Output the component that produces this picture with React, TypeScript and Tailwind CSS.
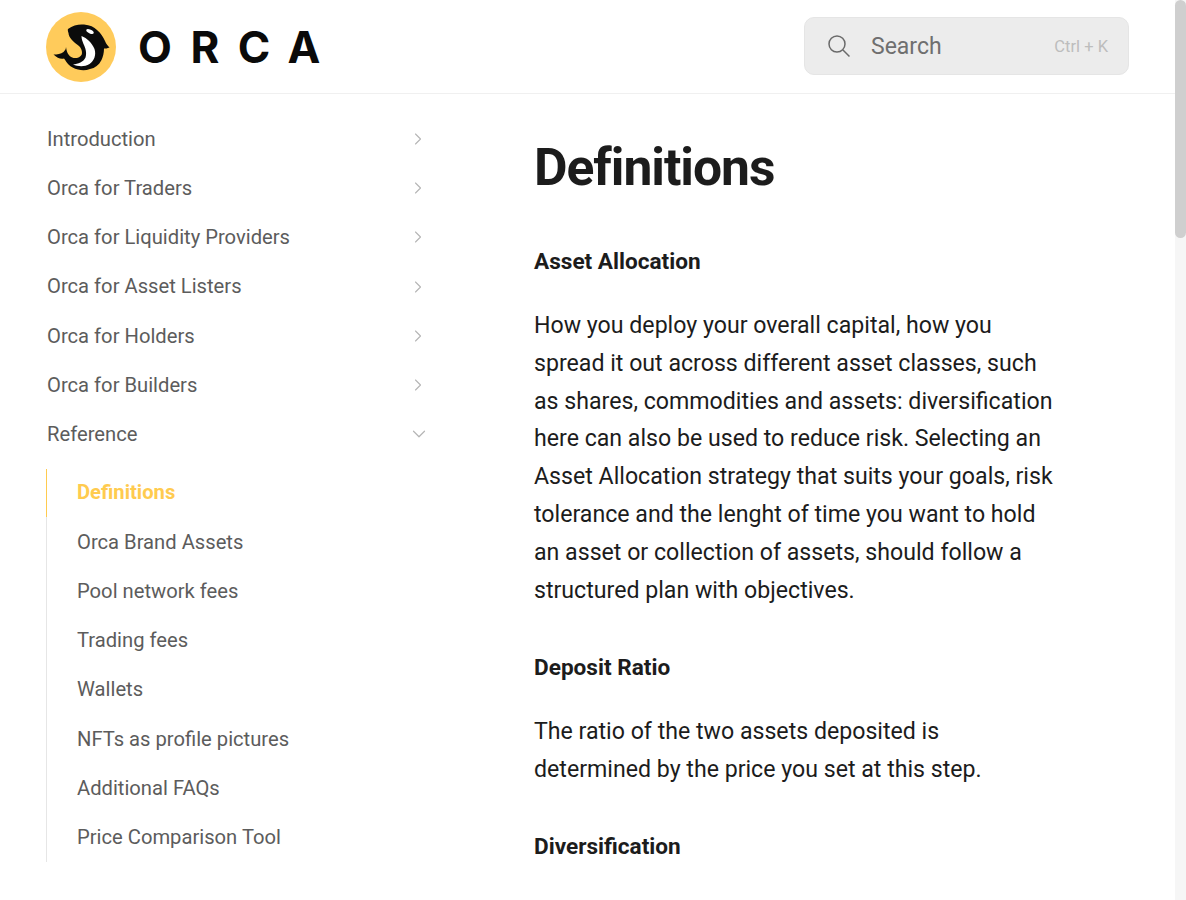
import { ChevronDown, ChevronRight } from "lucide-react";

const topItems = [
  "Introduction",
  "Orca for Traders",
  "Orca for Liquidity Providers",
  "Orca for Asset Listers",
  "Orca for Holders",
  "Orca for Builders",
];

const subItems = [
  "Orca Brand Assets",
  "Pool network fees",
  "Trading fees",
  "Wallets",
  "NFTs as profile pictures",
  "Additional FAQs",
  "Price Comparison Tool",
];

const OrcaMark = () => (
  <svg viewBox="0 0 70 70" className="h-[70px] w-[70px] shrink-0">
    <circle cx="35" cy="35" r="35" fill="#ffcb5b" />
    <path
      d="M22 17C27 13 33 12 38 12.5C44 13 48 15 51 18C55 21 57 25 59 29C60 32 62 34 63.5 35.5C61 36.5 60 36.5 58 36.5C58 41 57 45 55.5 48C53 53 49 56 44 57C40 58.500 36 58.500 32 57.500C28 56.500 25 55 22.500 52.500C21 51 19.500 48.500 18 46.500C15 47.500 11 46 7.500 42.500C11 42.500 15 42 17.500 40C19 38.500 20 37 20 35C20.500 38 21 41 22.500 42.500C24.500 45.500 28 46.500 31 46C34 45 36 43.500 36 41C36 38 35 36 33 34C30.500 32 27.500 30 25.500 27.500C24 25.500 22.500 23.500 22.500 21C22 19.500 21.500 18 22 17Z"
      fill="#0b0b0b"
    />
    <path
      d="M35.500 24C41 26 46 31 48.500 37C50.500 43 48 49 43.500 52C38.500 55 32 54.500 27 52.500C32 52 37.500 50 39.500 45.500C41 41 39.500 36 37.500 32C36.500 29.500 35.500 27 35.500 24Z"
      fill="#ffffff"
    />
    <ellipse cx="44" cy="19.500" rx="4" ry="1.800" fill="#ffffff" transform="rotate(25 44 19.500)" />
  </svg>
);

const NavRow = ({ label, open }: { label: string; open?: boolean }) => (
  <div className="flex h-[49.2px] items-center justify-between text-[20.2px] text-[#5c5c5c]">
    <span>{label}</span>
    {open ? (
      <ChevronDown className="-mr-[1px] h-[22px] w-[22px] text-[#b5b5b5]" strokeWidth={1.3} />
    ) : (
      <ChevronRight className="mr-[1px] h-[20px] w-[20px] text-[#b5b5b5]" strokeWidth={1.3} />
    )}
  </div>
);

const App = () => {
  return (
    <div className="flex h-[900px] overflow-hidden bg-white font-['Roboto',sans-serif]">
      <div className="min-w-0 flex-1">
        <header className="flex h-[94px] items-center justify-between border-b border-[#f0f0f0] pl-[46px] pr-[46px]">
          <div className="flex items-center">
            <OrcaMark />
            <span className="ml-[22px] mt-[1px] font-['Inter',sans-serif] text-[44px] leading-none font-bold tracking-[0.42em] text-[#0a0a0a]">
              ORCA
            </span>
          </div>
          <div className="mb-[1px] flex h-[58px] w-[325px] items-center rounded-[10px] border border-[#e5e5e5] bg-[#ececec] pl-[22px] pr-[20px]">
            <svg viewBox="0 0 24 24" className="-mt-[1px] h-[24px] w-[24px] text-[#6a6a6a]" fill="none" stroke="currentColor" strokeWidth="1.5">
              <circle cx="10" cy="10" r="8" />
              <path d="M16 16l6.500 6.500" />
            </svg>
            <span className="ml-[20px] flex-1 pt-[3px] text-[23px] text-[#6f6f6f]">Search</span>
            <span className="pt-[3px] text-[16.5px] text-[#bdbdbd]">Ctrl + K</span>
          </div>
        </header>

        <div className="flex">
          <nav className="w-[534px] shrink-0 pl-[47px] pr-[105px] pt-[20.400px]">
            {topItems.map((item) => (
              <NavRow key={item} label={item} />
            ))}
            <NavRow label="Reference" open />
            <div className="mt-[10.700px] -ml-px border-l border-[#e6e6e6]">
              <div className="-ml-px flex h-[48px] items-center border-l border-[#ffcb4f] pb-[2px] pl-[30px] text-[20.2px] font-bold text-[#ffcb4f]">
                Definitions
              </div>
              {subItems.map((item) => (
                <div key={item} className="flex h-[49.2px] items-center pl-[30px] text-[20.2px] text-[#5c5c5c]">
                  {item}
                </div>
              ))}
            </div>
          </nav>

          <main className="w-[522px] pt-[36px] text-[#1c1c1c]">
            <h1 className="text-[51.6px] leading-[76px] font-bold tracking-[-0.02em]">Definitions</h1>
            <h3 className="mt-[37px] text-[22.6px] leading-[38px] font-bold">Asset Allocation</h3>
            <p className="mt-[26px] text-[23.15px] leading-[37.8px]">
              How you deploy your overall capital, how you spread it out across different asset classes, such as shares,
              commodities and assets: diversification here can also be used to reduce risk. Selecting an Asset Allocation
              strategy that suits your goals, risk tolerance and the lenght of time you want to hold an asset or collection
              of assets, should follow a structured plan with objectives.
            </p>
            <h3 className="mt-[40px] text-[22.6px] leading-[38px] font-bold">Deposit Ratio</h3>
            <p className="mt-[26px] text-[23.15px] leading-[37.8px]">
              The ratio of the two assets deposited is determined by the price you set at this step.
            </p>
            <h3 className="mt-[39px] text-[22.6px] leading-[38px] font-bold">Diversification</h3>
          </main>
        </div>
      </div>

      <div className="w-[11px] shrink-0 bg-[#f6f6f6]">
        <div className="h-[238px] rounded-[6px] bg-[#cfcfcf]" />
      </div>
    </div>
  );
};

export default App;
